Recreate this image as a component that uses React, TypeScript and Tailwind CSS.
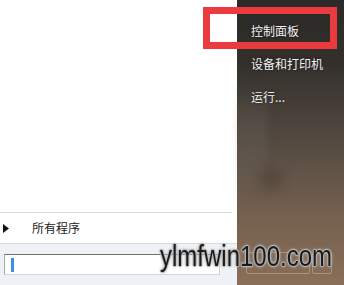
export default function App() {
  const items = ["控制面板", "设备和打印机", "运行..."];

  return (
    <div className="relative flex h-[285px] w-[344px] overflow-hidden bg-white font-['Noto_Sans_CJK_SC',sans-serif]">
      {/* left: programs list */}
      <div className="flex w-[237px] flex-col bg-white">
        <div className="flex-1" />
        <div className="mr-[5px] h-px bg-[#dcdcdc]" />
        <div className="flex h-[30px] items-center">
          <svg width="6" height="9" viewBox="0 0 6 9" className="ml-[3px]">
            <path d="M0 0 L6 4.5 L0 9 Z" fill="#111" />
          </svg>
          <span className="ml-[23px] text-[12px] leading-none text-[#222]">所有程序</span>
        </div>
        <div className="h-px bg-[#d8dbe0]" />
        <div className="flex-1 max-h-[41px] min-h-[41px] bg-[#eef1f5] pl-[4px] pt-[10px]">
          <div className="flex h-[21px] w-[216px] items-center border border-t-[#6f6f6f] border-l-[#a9a9a9] border-r-[#d0d0d0] border-b-[#d5d5d5] bg-white pl-[6px]">
            <div className="h-[14px] w-[3px] bg-[#3d8ee6]" />
          </div>
        </div>
      </div>

      {/* right: dark links panel */}
      <div className="relative flex-1 bg-[linear-gradient(180deg,#2b2a28_0%,#33302c_22%,#544a41_50%,#74604f_75%,#8a6f58_100%)]">
        <div className="absolute inset-y-[80px] left-0 w-[30px] bg-[linear-gradient(180deg,rgba(120,118,112,0)_0%,rgba(120,118,112,0.22)_40%,rgba(120,118,112,0.12)_80%,rgba(120,118,112,0)_100%)] blur-[3px]" />
        <div className="absolute left-[20px] top-[168px] h-[22px] w-[26px] rounded-full bg-[#3a2e26] opacity-35 blur-[7px]" />
        <div className="relative flex flex-col pl-[14px] pt-[14px]">
          {items.map((t) => (
            <div key={t} className="flex h-[33px] items-center text-[12px] leading-none text-[#f2f2f2] [text-shadow:0_0_3px_rgba(0,0,0,0.6)]">
              {t}
            </div>
          ))}
        </div>
        <div className="absolute left-[9px] top-[252px] h-[22px] w-[64px] rounded-[2px] border border-[#c9ad8c]/60" />
        <div className="absolute left-[75px] top-[252px] h-[22px] w-[20px] rounded-[2px] border border-[#c9ad8c]/60" />
      </div>

      {/* highlight frame */}
      <div className="absolute left-[203px] top-[7px] h-[42px] w-[134px] border-[7px] border-[#ec3b3f]" />

      {/* watermark */}
      <div className="absolute left-[160px] top-[241px] origin-left scale-x-[0.8] whitespace-nowrap font-['Liberation_Sans',sans-serif] text-[30px] leading-[30px] text-[#1a1a1a] [text-shadow:1px_0_0_#b8b8b8,-1px_0_0_#b8b8b8,0_1px_0_#b8b8b8,0_-1px_0_#b8b8b8,0_0_3px_#b0b0b0,0_0_3px_#b0b0b0,0_0_4px_#c0c0c0]">
        ylmfwin100.com
      </div>
    </div>
  );
}
